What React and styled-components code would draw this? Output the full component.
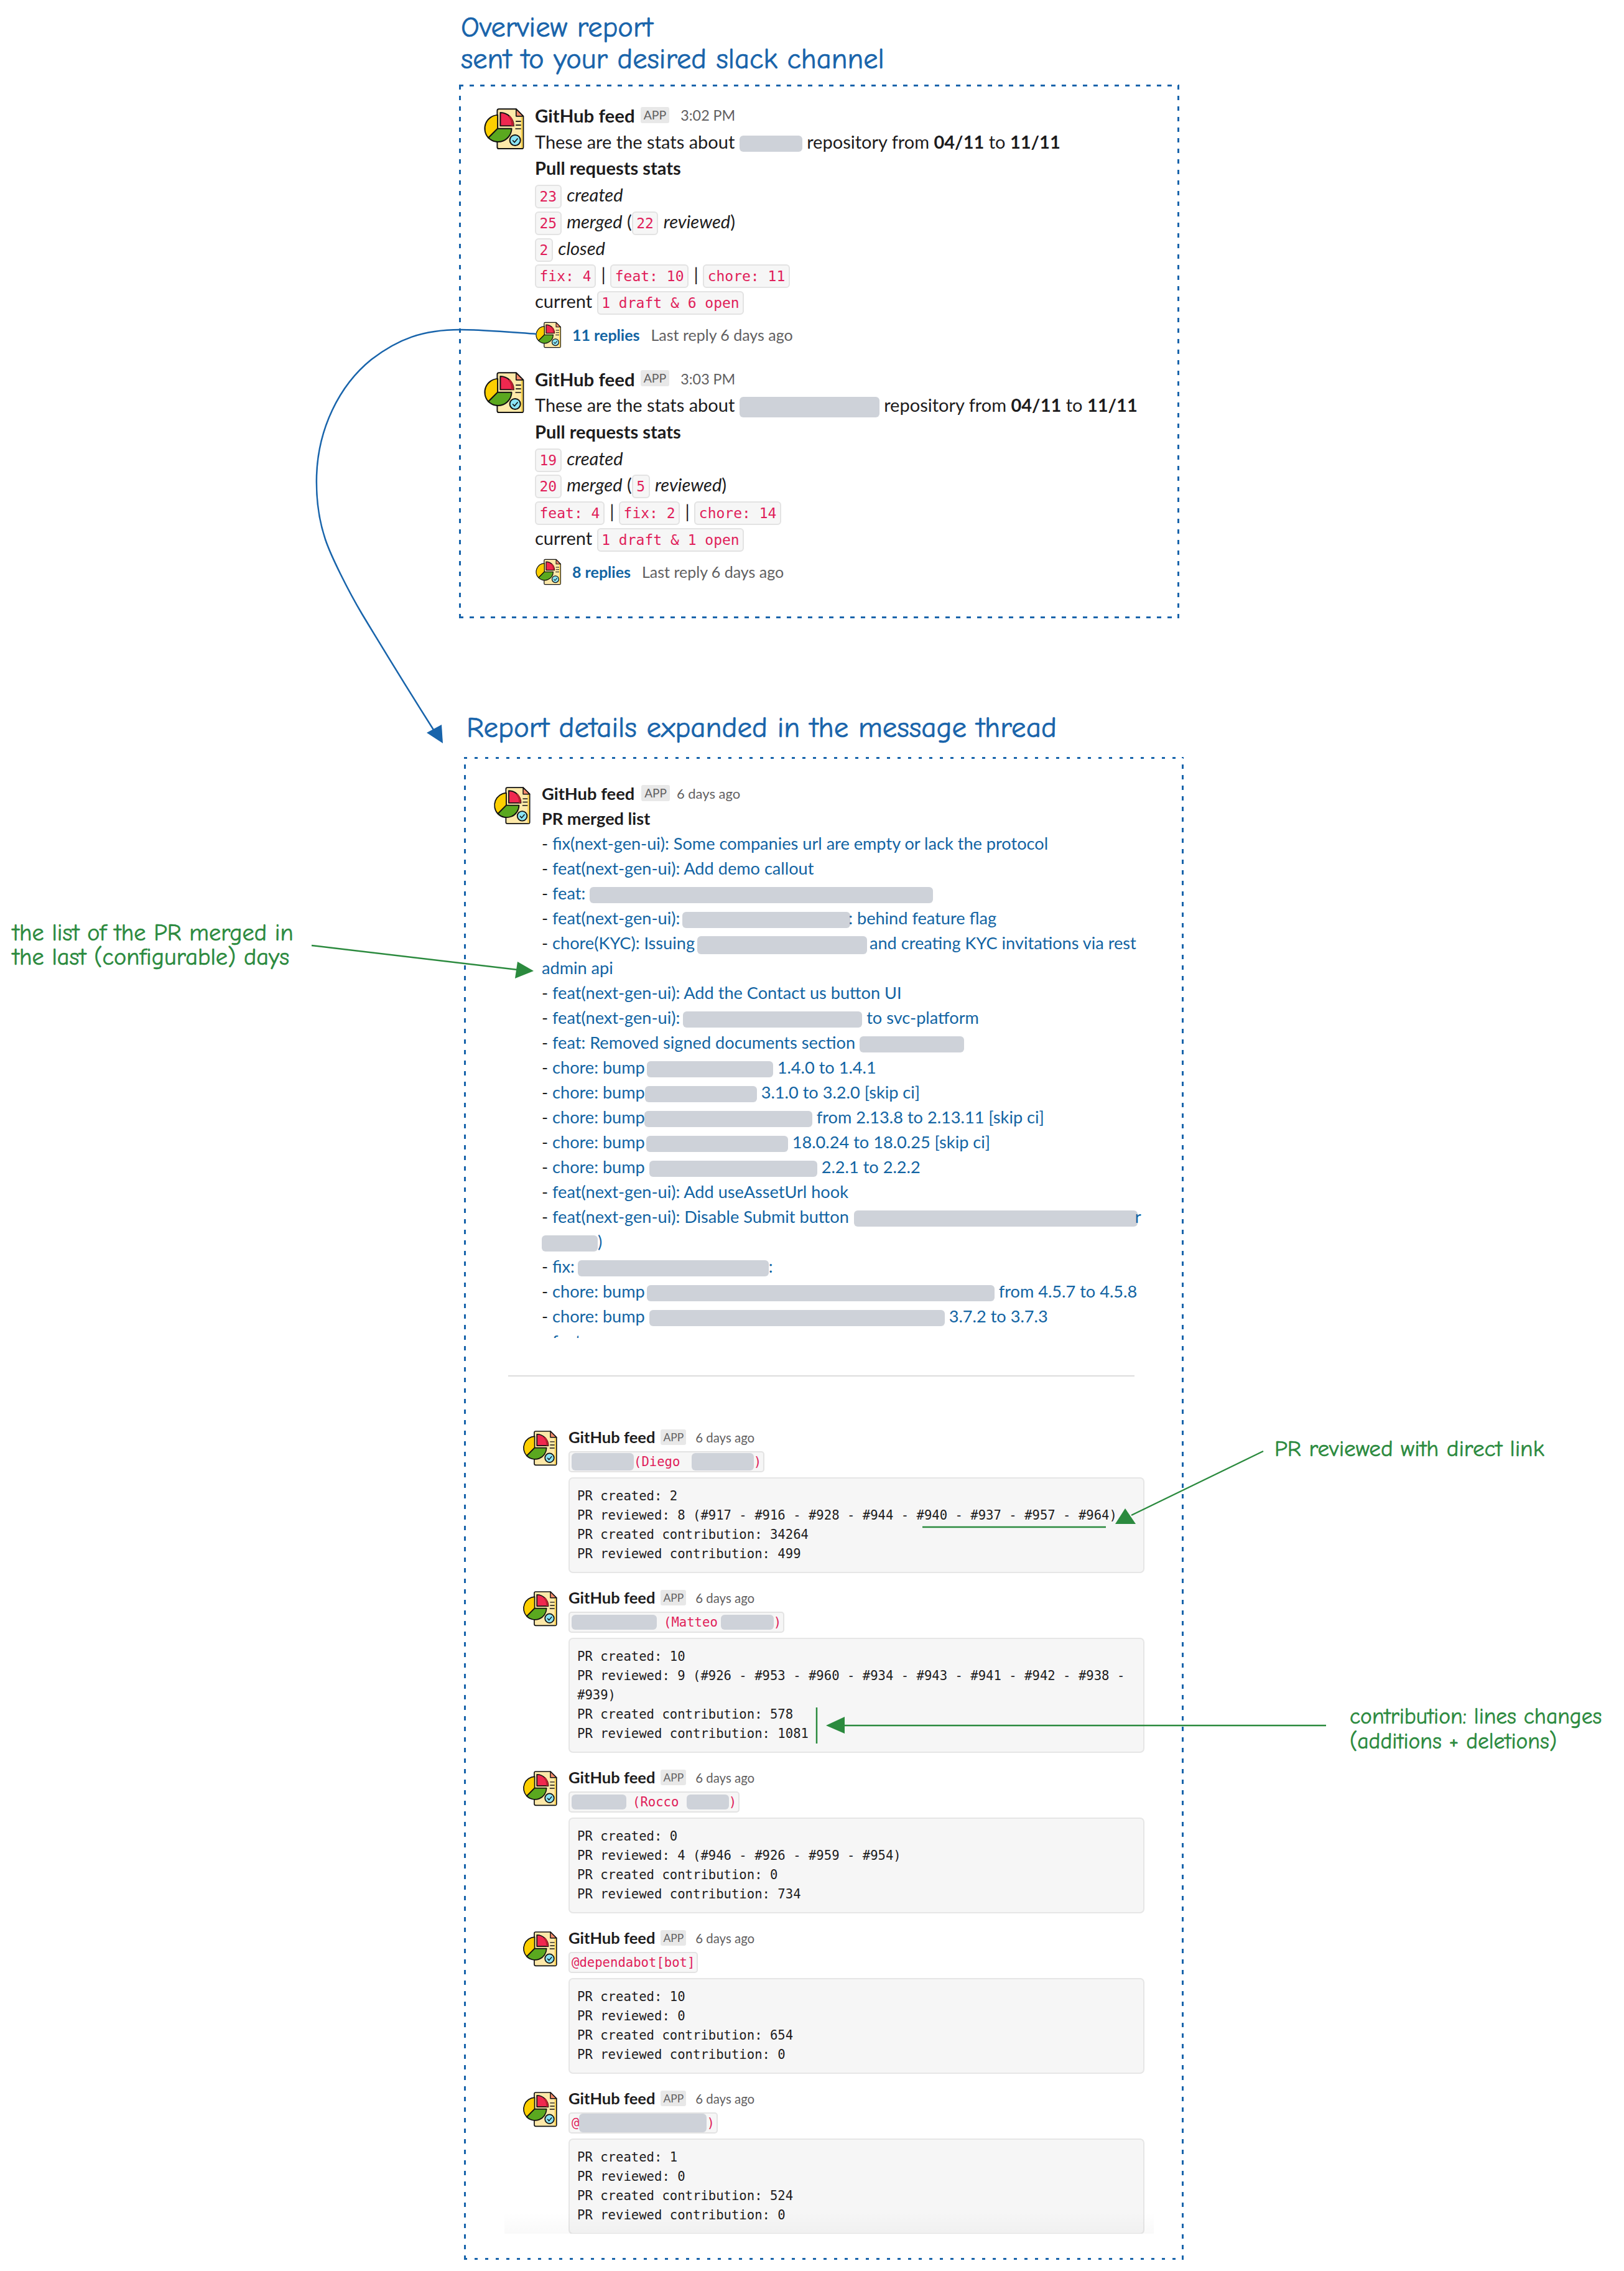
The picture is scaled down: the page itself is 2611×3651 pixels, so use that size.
import React from 'react'
import styled, { createGlobalStyle } from 'styled-components'

const BLUE = '#1864ab'
const GREEN = '#2b8a3e'
const HAND = `"Comic Neue", cursive`

const Global = createGlobalStyle`
  html, body { margin: 0; padding: 0; background: #fff; }
  body { font-family: Lato, "Open Sans", sans-serif; color: #1d1c1d; }
`

const Page = styled.div`
  position: relative;
  width: 2611px;
  height: 3651px;
  overflow: hidden;
  background: #fff;
  padding: 19px 0 0 738px;
  box-sizing: border-box;
  display: flex;
  flex-direction: column;
  align-items: flex-start;
`

const Title = styled.div`
  margin: ${p => p.$margin};
  font-family: ${HAND};
  font-size: ${p => p.$size}px;
  line-height: ${p => p.$line}px;
  color: ${BLUE};
  -webkit-text-stroke: 0.7px ${BLUE};
  white-space: nowrap;
`

const Frame = styled.div`
  box-sizing: border-box;
  flex: none;
  width: ${p => p.$w}px;
  height: ${p => p.$h}px;
  margin: ${p => p.$margin};
  padding: ${p => p.$padding};
  background-image:
    repeating-linear-gradient(90deg, ${BLUE} 0 ${p => p.$dash}px, transparent ${p => p.$dash}px 17px),
    repeating-linear-gradient(90deg, ${BLUE} 0 ${p => p.$dash}px, transparent ${p => p.$dash}px 17px),
    repeating-linear-gradient(0deg, ${BLUE} 0 7px, transparent 7px 17px),
    repeating-linear-gradient(0deg, ${BLUE} 0 7px, transparent 7px 17px);
  background-size: 100% 3px, 100% 3px, 3px 100%, 3px 100%;
  background-position: 0 0, 0 100%, 0 0, 100% 0;
  background-repeat: no-repeat;
`

const Msg = styled.div`
  display: grid;
  grid-template-columns: ${p => p.$col}px 1fr;
  margin-top: ${p => p.$top || 0}px;
  font-size: ${p => p.$font}px;
  line-height: ${p => p.$line}px;
`

const AvatarSlot = styled.div`
  padding-top: 8px;
`

const Icon = styled.svg`
  display: block;
  width: ${p => p.$size}px;
  height: ${p => p.$size}px;
`

const Header = styled.div`
  display: flex;
  align-items: center;
  height: ${p => p.$line}px;
  line-height: 1;
`

const Name = styled.span`
  font-weight: 700;
  font-size: ${p => p.$size}px;
`

const Badge = styled.span`
  margin: 0 0 2px ${p => p.$gap}px;
  padding: 0 ${p => p.$pad}px;
  height: ${p => p.$h}px;
  line-height: ${p => p.$h}px;
  font-size: ${p => p.$size}px;
  background: #e8e8e8;
  color: #616061;
  border-radius: 3px;
`

const Time = styled.span`
  margin-left: ${p => p.$gap}px;
  font-size: ${p => p.$size}px;
  color: #616061;
`

const Line = styled.div`
  white-space: nowrap;
`

const Code = styled.code`
  font-family: "DejaVu Sans Mono", monospace;
  font-size: 23px;
  line-height: 1;
  color: #e01e5a;
  background: #f6f6f6;
  border: 2px solid #e3e3e3;
  border-radius: 6px;
  padding: 4px 5.5px;
  margin-right: 1px;
`

const Blank = styled.span`
  display: inline-block;
  vertical-align: middle;
  width: ${p => p.$w}px;
  height: ${p => p.$h || 26}px;
  margin-left: ${p => p.$ml || 0}px;
  margin-right: ${p => p.$mr || 0}px;
  background: #ced2d9;
  border-radius: 6px;
`

const Replies = styled.div`
  display: flex;
  align-items: center;
  gap: 17px;
  height: 43px;
  margin-top: 11px;
  font-size: 25px;
`

const ReplyCount = styled.span`
  font-weight: 700;
  color: #1264a3;
`

const ReplyAgo = styled.span`
  margin-left: 1px;
  color: #616061;
`

const ListClip = styled.div`
  height: 815px;
  overflow: hidden;
  color: #1264a3;
`

const Row = styled.div`
  color: #1264a3;
`

const Dash = styled.span`
  color: #1d1c1d;
`

const Divider = styled.div`
  width: 1007px;
  height: 2px;
  margin: 60px 0 0 25px;
  background: #ddd;
`

const ThreadClip = styled.div`
  position: relative;
  box-sizing: border-box;
  width: 1044px;
  height: 1300px;
  margin: 78px 0 0 19px;
  padding: 0 15px 0 28px;
  overflow: hidden;
  &::after {
    content: '';
    position: absolute;
    left: 0;
    right: 0;
    bottom: 0;
    height: 34px;
    background: linear-gradient(to bottom, rgba(0, 0, 0, 0), rgba(0, 0, 0, 0.025));
  }
`

const Reply = styled.div`
  display: grid;
  grid-template-columns: 75px 1fr;
  margin-bottom: 20px;
`

const MentionRow = styled.div`
  height: 37px;
  display: flex;
  align-items: center;
`

const Mention = styled.div`
  display: flex;
  align-items: center;
  box-sizing: border-box;
  height: 34px;
  padding: 0 3px;
  font-family: "DejaVu Sans Mono", monospace;
  font-size: 20.6px;
  color: #e01e5a;
  background: #f6f6f6;
  border: 2px solid #e3e3e3;
  border-radius: 5px;
  white-space: pre;
`

const Pre = styled.pre`
  box-sizing: border-box;
  margin: 7px 0 0;
  padding: 13px 12px 13px;
  width: 926px;
  font-family: "DejaVu Sans Mono", monospace;
  font-size: 20.6px;
  line-height: 31px;
  color: #1d1c1d;
  background: #f6f6f6;
  border: 2px solid #e6e6e6;
  border-radius: 7px;
  white-space: pre-wrap;
`

const Note = styled.div`
  position: absolute;
  left: ${p => p.$x}px;
  top: ${p => p.$y}px;
  font-family: ${HAND};
  font-size: ${p => p.$size}px;
  line-height: ${p => p.$line}px;
  color: ${GREEN};
  -webkit-text-stroke: 0.6px ${GREEN};
  white-space: nowrap;
`

const Arrows = styled.svg`
  position: absolute;
  left: 0;
  top: 0;
  width: 2611px;
  height: 3651px;
  pointer-events: none;
`

const Avatar = ({ size }) => (
  <Icon $size={size} viewBox="18 33 204 206">
    <path d="M96 40H180L215 75V225Q215 233 207 233H96Q88 233 88 225V48Q88 40 96 40Z" fill="#fde9a9" stroke="#111" strokeWidth="6" />
    <rect x="204" y="76" width="8" height="154" fill="#fbd24e" />
    <path d="M180 40V75H215Z" fill="#f98b6c" stroke="#111" strokeWidth="5" strokeLinejoin="round" />
    <path d="M90 69A66 66 0 0 0 45 180L90 135Z" fill="#fdcf00" stroke="#111" strokeWidth="6" strokeLinejoin="round" />
    <path d="M45 180L90 135H158A66 66 0 0 1 45 180Z" fill="#5aa81f" stroke="#111" strokeWidth="6" strokeLinejoin="round" />
    <path d="M103 57A65 65 0 0 1 168 122H103Z" fill="#f0284f" stroke="#111" strokeWidth="6" strokeLinejoin="round" />
    <path d="M150 72A65 65 0 0 1 168 122H156A55 55 0 0 0 142 78Z" fill="#b81f2f" />
    <path d="M178 100H204M178 118H204M176 136H204" stroke="#111" strokeWidth="5" />
    <circle cx="175" cy="192" r="26" fill="#8be4f5" stroke="#111" strokeWidth="6" />
    <path d="M163 192L172 202L188 183" fill="none" stroke="#111" strokeWidth="5" />
  </Icon>
)

const MsgHead = ({ line, name, badge, time, label }) => (
  <Header $line={line}>
    <Name $size={name}>GitHub feed</Name>
    <Badge $gap={badge.gap} $pad={badge.pad} $h={badge.h} $size={badge.size}>APP</Badge>
    <Time $gap={time.gap} $size={time.size}>{label}</Time>
  </Header>
)

const bigBadge = { gap: 9, pad: 5, h: 26, size: 19.5 }
const bigTime = { gap: 18, size: 23.3 }
const midBadge = { gap: 11, pad: 5, h: 26, size: 19 }
const midTime = { gap: 11, size: 22 }
const smallBadge = { gap: 9, pad: 4, h: 25, size: 17.5 }
const smallTime = { gap: 15, size: 20.4 }

const Overview = ({ top, time, repo, rows, replies }) => (
  <Msg $col={84} $font={29} $line={42.7} $top={top}>
    <AvatarSlot><Avatar size={68} /></AvatarSlot>
    <div>
      <MsgHead line={41.7} name={29.4} badge={bigBadge} time={bigTime} label={time} />
      <Line>These are the stats about {repo} repository from <b>04/11</b> to <b>11/11</b></Line>
      <Line><b>Pull requests stats</b></Line>
      {rows}
      <Replies>
        <Avatar size={43} />
        <ReplyCount>{replies}</ReplyCount>
        <ReplyAgo>Last reply 6 days ago</ReplyAgo>
      </Replies>
    </div>
  </Msg>
)

const Item = ({ children }) => (
  <Row><Dash>- </Dash>{children}</Row>
)

const replyData = [
  {
    mention: <><Blank $w={100} $h={28} />{'(Diego '}<Blank $w={100} $h={28} $ml={6} />)</>,
    stats: 'PR created: 2\nPR reviewed: 8 (#917 - #916 - #928 - #944 - #940 - #937 - #957 - #964)\nPR created contribution: 34264\nPR reviewed contribution: 499',
  },
  {
    mention: <><Blank $w={137} $h={24} $mr={11} />(Matteo<Blank $w={85} $h={24} $ml={5} />)</>,
    stats: 'PR created: 10\nPR reviewed: 9 (#926 - #953 - #960 - #934 - #943 - #941 - #942 - #938 - #939)\nPR created contribution: 578\nPR reviewed contribution: 1081',
  },
  {
    mention: <><Blank $w={88} $h={24} $mr={10} />{'(Rocco '}<Blank $w={68} $h={24} />)</>,
    stats: 'PR created: 0\nPR reviewed: 4 (#946 - #926 - #959 - #954)\nPR created contribution: 0\nPR reviewed contribution: 734',
  },
  {
    mention: '@dependabot[bot]',
    stats: 'PR created: 10\nPR reviewed: 0\nPR created contribution: 654\nPR reviewed contribution: 0',
  },
  {
    mention: <>@<Blank $w={205} $h={30} />)</>,
    stats: 'PR created: 1\nPR reviewed: 0\nPR created contribution: 524\nPR reviewed contribution: 0',
  },
]

export default function App() {
  return (
    <Page>
      <Global />
      <Title $size={46.5} $line={51} $margin="0 0 0 3px">
        Overview report<br />sent to your desired slack channel
      </Title>

      <Frame $w={1158} $h={858} $dash={7} $margin="15px 0 0 0" $padding="29px 38px 0">
        <Overview
          time="3:02 PM"
          repo={<Blank $w={101} />}
          replies="11 replies"
          rows={<>
            <Line><Code>23</Code> <i>created</i></Line>
            <Line><Code>25</Code> <i>merged</i> (<Code>22</Code> <i>reviewed</i>)</Line>
            <Line><Code>2</Code> <i>closed</i></Line>
            <Line><Code>fix: 4</Code> | <Code>feat: 10</Code> | <Code>chore: 11</Code></Line>
            <Line>current <Code>1 draft &amp; 6 open</Code></Line>
          </>}
        />
        <Overview
          top={29}
          time="3:03 PM"
          repo={<Blank $w={225} $h={33} />}
          replies="8 replies"
          rows={<>
            <Line><Code>19</Code> <i>created</i></Line>
            <Line><Code>20</Code> <i>merged</i> (<Code>5</Code> <i>reviewed</i>)</Line>
            <Line><Code>feat: 4</Code> | <Code>fix: 2</Code> | <Code>chore: 14</Code></Line>
            <Line>current <Code>1 draft &amp; 1 open</Code></Line>
          </>}
        />
      </Frame>

      <Title $size={47} $line={60} $margin="146px 0 0 12px">
        Report details expanded in the message thread
      </Title>

      <Frame $w={1157} $h={2416} $dash={5} $margin="17px 0 0 8px" $padding="39px 46px 0">
        <Msg $col={79} $font={27.15} $line={40}>
          <AvatarSlot><Avatar size={62} /></AvatarSlot>
          <div>
            <MsgHead line={40} name={27.3} badge={midBadge} time={midTime} label="6 days ago" />
            <Line><b>PR merged list</b></Line>
            <ListClip>
              <Item>fix(next-gen-ui): Some companies url are empty or lack the protocol</Item>
              <Item>feat(next-gen-ui): Add demo callout</Item>
              <Item>feat: <Blank $w={552} /></Item>
              <Item>feat(next-gen-ui): <Blank $w={270} $ml={-3} $mr={-3} />: behind feature flag</Item>
              <Item>chore(KYC): Issuing <Blank $w={273} $h={29} $ml={-3} $mr={-3} /> and creating KYC invitations via rest admin api</Item>
              <Item>feat(next-gen-ui): Add the Contact us button UI</Item>
              <Item>feat(next-gen-ui): <Blank $w={288} $ml={-2} /> to svc-platform</Item>
              <Item>feat: Removed signed documents section <Blank $w={168} /></Item>
              <Item>chore: bump <Blank $w={203} $ml={-4} /> 1.4.0 to 1.4.1</Item>
              <Item>chore: bump <Blank $w={180} $ml={-7} /> 3.1.0 to 3.2.0 [skip ci]</Item>
              <Item>chore: bump <Blank $w={270} $ml={-8} /> from 2.13.8 to 2.13.11 [skip ci]</Item>
              <Item>chore: bump <Blank $w={228} $ml={-5} /> 18.0.24 to 18.0.25 [skip ci]</Item>
              <Item>chore: bump <Blank $w={270} /> 2.2.1 to 2.2.2</Item>
              <Item>feat(next-gen-ui): Add useAssetUrl hook</Item>
              <Item>feat(next-gen-ui): Disable Submit button <Blank $w={456} $ml={1} $mr={-4} />r <Blank $w={90} />)</Item>
              <Item>fix: <Blank $w={307} $ml={-2} />:</Item>
              <Item>chore: bump <Blank $w={559} $ml={-4} /> from 4.5.7 to 4.5.8</Item>
              <Item>chore: bump <Blank $w={475} /> 3.7.2 to 3.7.3</Item>
              <Item>feat</Item>
            </ListClip>
          </div>
        </Msg>
        <Divider />
        <ThreadClip>
          {replyData.map((r, i) => (
            <Reply key={i}>
              <AvatarSlot><Avatar size={58} /></AvatarSlot>
              <div>
                <MsgHead line={40} name={25.5} badge={smallBadge} time={smallTime} label="6 days ago" />
                <MentionRow><Mention>{r.mention}</Mention></MentionRow>
                <Pre>{r.stats}</Pre>
              </div>
            </Reply>
          ))}
        </ThreadClip>
      </Frame>

      <Arrows viewBox="0 0 2611 3651">
        <path d="M863 537C820 534 775 530 740 530C680 530 640 545 597 578C545 620 511 690 509 766C508 805 514 840 523 867C532 894 560 950 582 987C620 1050 660 1115 700 1178" fill="none" stroke={BLUE} strokeWidth="2.5" />
        <polygon points="686,1178 710,1165 712,1195" fill={BLUE} />
        <path d="M501 1520L832 1559" fill="none" stroke={GREEN} strokeWidth="2.5" />
        <polygon points="832,1546 858,1561 828,1573" fill={GREEN} />
        <path d="M2031 2333L1819 2436" fill="none" stroke={GREEN} strokeWidth="2.5" />
        <polygon points="1809,2425 1793,2450 1826,2450" fill={GREEN} />
        <path d="M1483 2455H1778" fill="none" stroke={GREEN} strokeWidth="2.5" />
        <path d="M1313 2745V2803" fill="none" stroke={GREEN} strokeWidth="2.5" />
        <path d="M1358 2774H2132" fill="none" stroke={GREEN} strokeWidth="2.5" />
        <polygon points="1328,2774 1358,2760 1358,2787" fill={GREEN} />
      </Arrows>

      <Note $x={20} $y={1481} $size={38.3} $line={39}>the list of the PR merged in<br />the last (configurable) days</Note>
      <Note $x={2049} $y={2309} $size={37.2} $line={40}>PR reviewed with direct link</Note>
      <Note $x={2170} $y={2740} $size={35.5} $line={40}>contribution: lines changes<br />(additions + deletions)</Note>
    </Page>
  )
}
